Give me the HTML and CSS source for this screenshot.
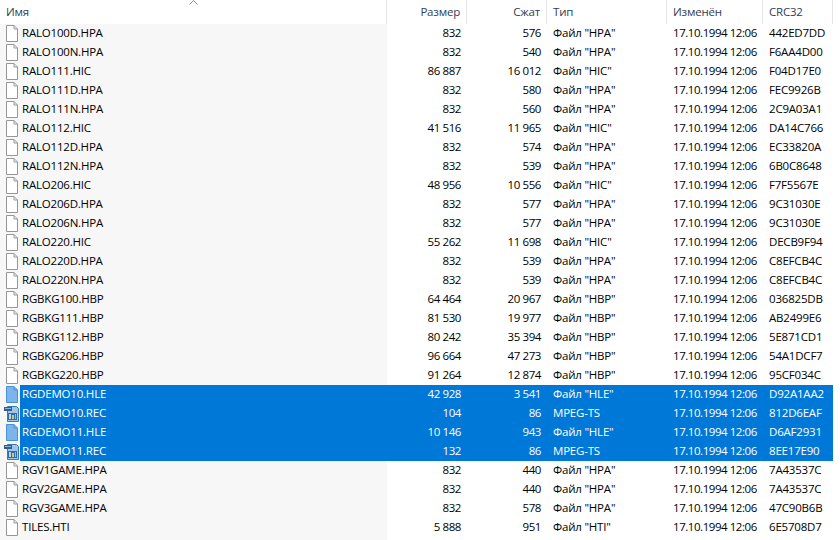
FILE: index.html
```html
<!DOCTYPE html>
<html lang="ru">
<head>
<meta charset="utf-8">
<title>Файлы</title>
<link rel="stylesheet" href="styles.css">
</head>
<body>
<svg class="defs" width="0" height="0">
<symbol id="doc" viewBox="0 0 12 17"><path d="M.5.5h7.5l3.5 3.5v12.500H.5z" fill="#fff" stroke="#979797"/><path d="M8 .5v3.500h3.500" fill="none" stroke="#979797"/></symbol>
<symbol id="docs" viewBox="0 0 12 17"><path d="M.5.5h7.500l3.500 3.500v12.500H.5z" fill="#7db4ea" stroke="#4a92d8"/><path d="M8 .5v3.500h3.500" fill="none" stroke="#4a92d8"/></symbol>
<symbol id="vid" viewBox="0 0 15 16"><path d="M3.500.5h9l2 2v13h-11z" fill="#9fc6ea" stroke="#3d79b0"/><rect x="0" y="1" width="8" height="4" fill="#2f5f8c"/><rect x="1" y="2" width="6" height="1" fill="#8fb4d4"/><rect x="4" y="7" width="9" height="7" fill="#2b6ea8"/><rect x="5" y="8" width="2" height="5" fill="#b7d6ee"/><rect x="8" y="9" width="2" height="4" fill="#d8c56e"/><rect x="11" y="8" width="1" height="5" fill="#9cc79a"/></symbol>
</svg>
<div class="head">
<span class="h name">Имя<svg class="sort" viewBox="0 0 9 5"><path d="M.5 4.500 4.500.5l4 4" fill="none" stroke="#8a8a8a"/></svg></span><span class="h r size">Размер</span><span class="h r comp">Сжат</span><span class="h type">Тип</span><span class="h date">Изменён</span><span class="h crc">CRC32</span>
</div>
<div class="list" id="list"></div>
<script src="app.js"></script>
</body>
</html>
```
FILE: styles.css
```css
html, body { margin: 0; padding: 0; background: #fff; }
body { width: 840px; height: 540px; overflow: hidden; font: 11.5px/19px "Open Sans", "Liberation Sans", sans-serif; letter-spacing: -0.2px; color: #000; }
.defs { position: absolute; }
.head { display: flex; height: 24px; color: #2f4056; }
.h { box-sizing: border-box; border-right: 1px solid #e5e5e5; padding: 2px 6px 0; line-height: 19px; height: 24px; position: relative; }
.name { width: 387px; }
.size, .comp { width: 80px; }
.type { width: 120px; }
.date { width: 96px; }
.crc { width: 70px; }
.r { text-align: right; }
.sort { position: absolute; left: 189px; top: 0; width: 9px; height: 5px; }
.list { height: 516px; background: linear-gradient(to right, #f7f7f7 387px, #fff 387px); }
.row { display: flex; height: 19px; }
.cell { box-sizing: border-box; height: 19px; padding: 0 6px; line-height: 17px; white-space: nowrap; overflow: hidden; }
.ic { width: 20px; height: 19px; display: flex; align-items: center; flex: none; padding-left: 6px; box-sizing: border-box; }
.ic svg { width: 12px; height: 17px; }
.ic .v { width: 15px; height: 16px; margin-left: -2px; }
.cname { width: 367px; padding-left: 2px; }
.date.cell { letter-spacing: -0.45px; }
.size.cell, .comp.cell { letter-spacing: -0.4px; }
.row.sel .cell { background: #0078d7; color: #fff; }
```
FILE: app.js
```js
const data = `RALO100D.HPA|832|576|Файл "HPA"|442ED7DD
RALO100N.HPA|832|540|Файл "HPA"|F6AA4D00
RALO111.HIC|86 887|16 012|Файл "HIC"|F04D17E0
RALO111D.HPA|832|580|Файл "HPA"|FEC9926B
RALO111N.HPA|832|560|Файл "HPA"|2C9A03A1
RALO112.HIC|41 516|11 965|Файл "HIC"|DA14C766
RALO112D.HPA|832|574|Файл "HPA"|EC33820A
RALO112N.HPA|832|539|Файл "HPA"|6B0C8648
RALO206.HIC|48 956|10 556|Файл "HIC"|F7F5567E
RALO206D.HPA|832|577|Файл "HPA"|9C31030E
RALO206N.HPA|832|577|Файл "HPA"|9C31030E
RALO220.HIC|55 262|11 698|Файл "HIC"|DECB9F94
RALO220D.HPA|832|539|Файл "HPA"|C8EFCB4C
RALO220N.HPA|832|539|Файл "HPA"|C8EFCB4C
RGBKG100.HBP|64 464|20 967|Файл "HBP"|036825DB
RGBKG111.HBP|81 530|19 977|Файл "HBP"|AB2499E6
RGBKG112.HBP|80 242|35 394|Файл "HBP"|5E871CD1
RGBKG206.HBP|96 664|47 273|Файл "HBP"|54A1DCF7
RGBKG220.HBP|91 264|12 874|Файл "HBP"|95CF034C
RGDEMO10.HLE|42 928|3 541|Файл "HLE"|D92A1AA2|s
RGDEMO10.REC|104|86|MPEG-TS|812D6EAF|v
RGDEMO11.HLE|10 146|943|Файл "HLE"|D6AF2931|s
RGDEMO11.REC|132|86|MPEG-TS|8EE17E90|v
RGV1GAME.HPA|832|440|Файл "HPA"|7A43537C
RGV2GAME.HPA|832|440|Файл "HPA"|7A43537C
RGV3GAME.HPA|832|578|Файл "HPA"|47C90B6B
TILES.HTI|5 888|951|Файл "HTI"|6E5708D7`.split("\n");
const list = document.getElementById("list");
for (const line of data) {
  const [n, sz, c, t, crc, k] = line.split("|");
  const row = document.createElement("div");
  row.className = "row" + (k ? " sel" : "");
  const icon = k === "v"
    ? '<svg class="v"><use href="#vid"/></svg>'
    : '<svg><use href="#' + (k === "s" ? "docs" : "doc") + '"/></svg>';
  const cell = (cls, txt) => {
    const s = document.createElement("span");
    s.className = "cell " + cls;
    s.textContent = txt;
    return s;
  };
  const ic = document.createElement("span");
  ic.className = "ic";
  ic.innerHTML = icon;
  row.append(ic, cell("cname", n), cell("size r", sz), cell("comp r", c), cell("type", t),
    cell("date", "17.10.1994 12:06"), cell("crc", crc));
  list.append(row);
}
```
